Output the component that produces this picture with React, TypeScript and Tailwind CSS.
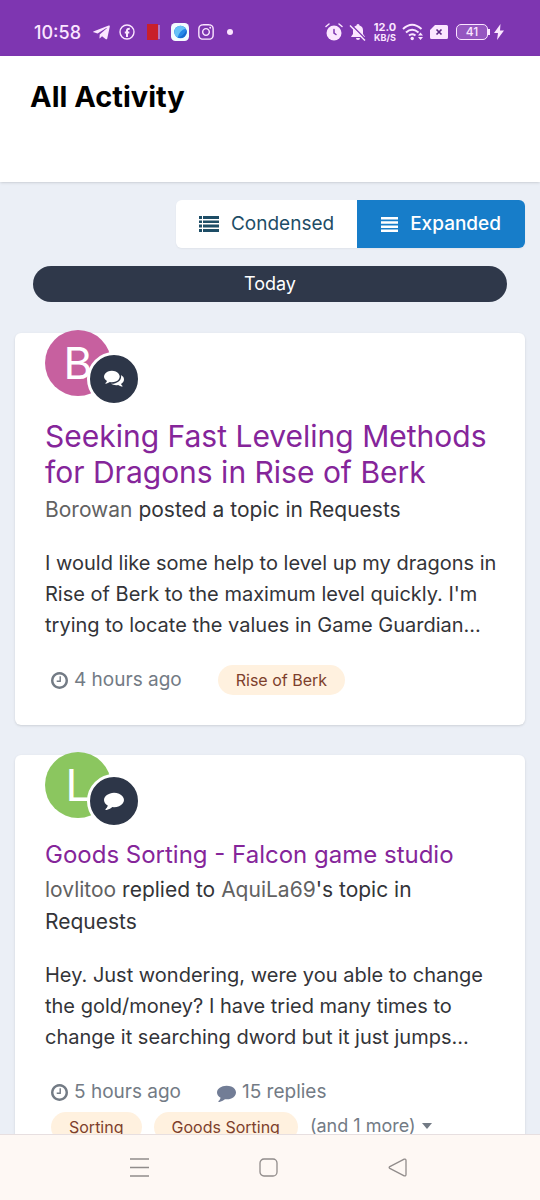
import React from 'react';
import { FaTelegramPlane, FaInstagram } from 'react-icons/fa';

const CommentIcon: React.FC<{ className?: string }> = ({ className }) => (
  <svg viewBox="0 0 1792 1792" fill="currentColor" className={className}>
    <path d="M1792 896q0 174-120 321.5t-326 233-450 85.5q-70 0-145-8-198 175-460 242-49 14-114 22-17 2-30.5-9t-17.5-29v-1q-3-4-.5-12t2-10 4.5-9.5l6-9 7-8.5 8-9q7-8 31-34.5t34.5-38 31-39.5 32.5-51 27-59 26-76q-157-89-247.5-220t-90.5-281q0-130 71-248.5t191-204.5 286-136.5 348-50.5q244 0 450 85.5t326 233 120 321.5z" />
  </svg>
);

const CommentsIcon: React.FC<{ className?: string }> = ({ className }) => (
  <svg viewBox="0 0 1792 1792" fill="currentColor" className={className}>
    <path d="M1408 768q0 139-94 257t-256.5 186.5-353.5 68.5q-86 0-176-16-124 88-278 128-36 9-86 16h-3q-11 0-20.5-8t-11.5-21q-1-3-1-6.5t.5-6.5 2-6l2.5-5 3.5-5.5 4-5 4.5-5 4-4.5q5-6 23-25t26-29.5 22.5-29 25-38.5 20.5-44q-124-72-195-177t-71-224q0-139 94-257t256.5-186.5 353.5-68.5 353.5 68.5 256.500 186.5 94 257zm384 256q0 120-71 224.5t-195 176.5q10 24 20.5 44t25 38.5 22.5 29 26 29.5 23 25q1 1 4 4.5t4.5 5 4 5 3.5 5.5l2.5 5 2 6 .5 6.5-1 6.5q-3 14-13 22t-22 7q-50-7-86-16-154-40-278-128-90 16-176 16-271 0-472-132 58 4 88 4 161 0 309-45t264-129q125-92 192-212t67-254q0-77-23-152 129 71 204 178t75 230z" />
  </svg>
);

const ClockIcon: React.FC = () => (
  <svg viewBox="128 128 1536 1536" fill="currentColor" className="size-[17px]">
    <path d="M1024 544v448q0 14-9 23t-23 9h-320q-14 0-23-9t-9-23v-64q0-14 9-23t23-9h224v-352q0-14 9-23t23-9h64q14 0 23 9t9 23zm416 352q0-148-73-273t-198-198-273-73-273 73-198 198-73 273 73 273 198 198 273 73 273-73 198-198 73-273zm224 0q0 209-103 385.5t-279.5 279.5-385.5 103-385.5-103-279.5-279.5-103-385.5 103-385.5 279.5-279.5 385.5-103 385.5 103 279.5 279.5 103 385.5z" />
  </svg>
);

const StatusBar: React.FC = () => (
  <div className="flex h-14 shrink-0 items-center justify-between bg-[#7e36b1] pt-2 pr-9 pl-[34px] text-[#fbe6ff]">
    <div className="flex items-center">
      <span className="w-[58px] text-[18px] font-medium">10:58</span>
      <FaTelegramPlane className="size-[19px]" />
      <svg viewBox="0 0 16 16" className="ml-2 size-4" fill="none" stroke="currentColor">
        <circle cx="8" cy="8" r="7" strokeWidth="1.4" />
        <path d="M8 13V6.600Q8 4.500 10.800 4.700M5.800 8.500h4.500" strokeWidth="2" />
      </svg>
      <svg viewBox="0 0 14 18" className="ml-3 h-[18px] w-3.5">
        <path fill="#c9202b" d="M0 1h11v16H0z" />
        <path fill="#e5b5d3" d="M11.500 2h1v14h-1z" />
      </svg>
      <svg viewBox="0 0 18 18" className="ml-2.5 size-[18px]">
        <rect width="18" height="18" rx="4.500" fill="#f4fbff" />
        <circle cx="9.500" cy="9" r="6.300" fill="#2687e8" />
        <path d="M3.500 9a6 6 0 0 1 11-3.500Q9 7 6.500 14.500A6 6 0 0 1 3.500 9z" fill="#68c1f7" />
        <path d="M15.500 7q-2 5-8 7.600a6.300 6.300 0 0 0 8-7.600z" fill="#1768cf" />
      </svg>
      <FaInstagram className="ml-2 size-[18px]" />
      <span className="ml-3 size-1.5 rounded-full bg-current" />
    </div>

    <div className="flex items-center">
      <svg viewBox="0 0 18 18" className="size-[18px]" fill="none" stroke="currentColor" strokeLinecap="round">
        <circle cx="9" cy="10" r="7.500" fill="currentColor" stroke="none" />
        <path d="M1 3.500 4 1M17 3.500 14 1" strokeWidth="1.500" />
        <path d="M9 6.500V10l2 1.500" stroke="#7e36b1" strokeWidth="1.500" />
      </svg>
      <svg viewBox="0 0 18 18" className="ml-1.5 size-[18px]">
        <path d="M9 1a1.500 1.500 0 0 1 1.500 1.600A5 5 0 0 1 14 7.500V11l1.800 2.500V14H2.200v-.5L4 11V7.500a5 5 0 0 1 3.500-4.900A1.500 1.500 0 0 1 9 1zM7 15h4a2 2 0 0 1-4 0z" fill="currentColor" />
        <path d="m2 1.500 15 15" stroke="#7e36b1" strokeWidth="1.500" />
        <path d="m1 2.500 15 15" stroke="currentColor" strokeWidth="1.500" />
      </svg>
      <span className="ml-1 flex w-7 flex-col items-center font-bold">
        <span className="text-[11px] leading-[11px]">12.0</span>
        <span className="text-[9px] leading-[9px]">KB/S</span>
      </span>
      <svg viewBox="0 0 22 18" className="ml-[3px] h-[18px] w-[22px]" fill="none" stroke="currentColor">
        <path d="M1 6Q10 -2.500 19.500 6M4 9.500Q10 4 16.500 9.500M7 12.500Q10 10 13.500 12.500" strokeWidth="2" />
        <circle cx="10.200" cy="15.500" r="1.700" fill="currentColor" stroke="none" />
        <path d="m16 12.500 2.500-3 2.500 3zM16 14l2.500 3 2.500-3z" fill="currentColor" stroke="none" />
      </svg>
      <svg viewBox="0 0 18 14" className="ml-1.5 h-3.5 w-[18px]">
        <path d="M5 0h11.500A1.500 1.500 0 0 1 18 1.500v11a1.500 1.500 0 0 1-1.500 1.500h-15A1.500 1.500 0 0 1 0 12.500V5z" fill="currentColor" />
        <path d="m6.500 4.500 5 5m0-5-5 5" stroke="#5d2886" strokeWidth="1.700" />
      </svg>
      <span className="ml-2 flex h-4 w-8 items-center justify-center rounded-[5px] border border-current bg-[#9556c0] text-[12px] font-medium">41</span>
      <span className="h-1.5 w-0.5 bg-current" />
      <svg viewBox="0 0 10 16" className="ml-1 h-4 w-2.5" fill="currentColor">
        <path d="M6.500 0 0 9h4l-1 7 7-9.500H6z" />
      </svg>
    </div>
  </div>
);

const ViewSwitch: React.FC = () => (
  <div className="flex justify-end">
    <div className="flex h-12 overflow-hidden rounded-md text-[19px] shadow-xs">
      <button type="button" className="flex items-center gap-3 bg-white px-[23px] text-[#1d4d66]">
        <svg viewBox="0 0 20 16" className="h-4 w-5" fill="currentColor">
          <path d="M0 0h3v3H0zM4 0h16v3H4zM0 4.500h3v2.500H0zM4 4.500h16v2.500H4zM0 8.500h3v3H0zM4 8.500h16v3H4zM0 13h3v3H0zM4 13h16v3H4z" />
        </svg>
        Condensed
      </button>
      <button type="button" className="flex items-center gap-3 bg-[#177dc9] px-6 font-medium text-white">
        <svg viewBox="0 0 17 15" className="h-[15px] w-[17px]" fill="currentColor">
          <path d="M0 0h17v2.500H0zM0 4.200h17v2.500H0zM0 8.400h17v2.500H0zM0 12.500h17v2.500H0z" />
        </svg>
        Expanded
      </button>
    </div>
  </div>
);

interface AvatarProps {
  letter: string;
  color: string;
  children: React.ReactNode;
}

const Avatar: React.FC<AvatarProps> = ({ letter, color, children }) => (
  <div className="relative -mt-[3px] h-[74px] w-24">
    <div className={`flex size-[66px] items-center justify-center rounded-full text-[44px] text-white ${color}`}>
      {letter}
    </div>
    <div className="absolute right-0 -bottom-0.5 flex size-[54px] items-center justify-center rounded-full border-3 border-white bg-[#2d3648] pb-0.5 text-white">
      {children}
    </div>
  </div>
);

const Card: React.FC<{ children: React.ReactNode }> = ({ children }) => (
  <article className="rounded-md bg-white pr-6 pb-[30px] pl-[30px] shadow-sm">{children}</article>
);

const Tag: React.FC<{ children: React.ReactNode }> = ({ children }) => (
  <a href="#" className="rounded-full bg-[#fff1df] px-[18px] text-[16px] leading-[30px] text-[#7d3f2c]">
    {children}
  </a>
);

export default function App() {
  return (
    <div className="flex h-screen flex-col bg-[#ebeff6] font-['Inter',sans-serif] text-[#333438]">
      <StatusBar />

      <header className="z-10 h-[126px] shrink-0 bg-white px-[30px] pt-5 shadow-sm">
        <h1 className="text-[29px] leading-[42px] font-bold text-black">All Activity</h1>
      </header>

      <main className="min-h-0 flex-1 overflow-hidden px-[15px] pt-[18px]">
        <ViewSwitch />
        <h2 className="mx-[18px] mt-[18px] rounded-full bg-[#2f384a] text-center text-[18px] leading-9 text-white">Today</h2>

        <div className="mt-[31px] flex flex-col gap-[30px]">
          <Card>
            <Avatar letter="B" color="bg-[#c7609f]">
              <CommentsIcon className="size-5" />
            </Avatar>
            <h3 className="mt-[14px] text-[30px] leading-9 text-[#85259a]">
              <a href="#">Seeking Fast Leveling Methods for Dragons in Rise of Berk</a>
            </h3>
            <p className="mt-1 text-[21px] leading-8">
              <a href="#" className="text-[#626262]">Borowan</a> posted a topic in <a href="#">Requests</a>
            </p>
            <p className="mt-[22px] text-[20px] leading-[31px]">
              I would like some help to level up my dragons in Rise of Berk to the maximum level quickly. I'm trying to locate the values in Game Guardian...
            </p>
            <div className="mt-6 flex items-center gap-9 pl-1.5 text-[19px] leading-[30px] text-[#737b85]">
              <a href="#" className="flex items-center gap-1.5">
                <ClockIcon />
                4 hours ago
              </a>
              <Tag>Rise of Berk</Tag>
            </div>
          </Card>

          <Card>
            <Avatar letter="L" color="bg-[#8bc65f]">
              <CommentIcon className="size-5" />
            </Avatar>
            <h3 className="mt-[14px] text-[24px] leading-[30px] text-[#85259a]">
              <a href="#">Goods Sorting - Falcon game studio</a>
            </h3>
            <p className="mt-1 text-[21px] leading-8">
              <a href="#" className="text-[#626262]">lovlitoo</a> replied to <a href="#" className="text-[#626262]">AquiLa69</a>'s topic in <a href="#">Requests</a>
            </p>
            <p className="mt-[22px] text-[20px] leading-[31px]">
              Hey. Just wondering, were you able to change the gold/money? I have tried many times to change it searching dword but it just jumps...
            </p>
            <div className="mt-6 flex items-center gap-9 pl-1.5 text-[19px] leading-[30px] text-[#737b85]">
              <a href="#" className="flex items-center gap-1.5">
                <ClockIcon />
                5 hours ago
              </a>
              <a href="#" className="flex items-center gap-1.5">
                <CommentIcon className="size-[19px] text-[#727d96]" />
                15 replies
              </a>
            </div>
            <div className="mt-[5px] flex items-start gap-3 pl-1.5 text-[18px] leading-[28px] text-[#737b85]">
              <Tag>Sorting</Tag>
              <Tag>Goods Sorting</Tag>
              <button type="button" className="flex items-center gap-1.5">
                (and 1 more)
                <svg viewBox="0 0 10 6" className="h-1.5 w-2.5" fill="currentColor">
                  <path d="M0 0h10L5 6z" />
                </svg>
              </button>
            </div>
          </Card>
        </div>
      </main>

      <nav className="flex h-[66px] shrink-0 items-center justify-center gap-[110px] border-t border-[#e7dfe0] bg-[#fef8f4] pr-[3px] text-[#918c8b]">
        <button type="button" aria-label="Recent apps">
          <svg viewBox="0 0 19 19" className="size-[19px]" fill="none" stroke="currentColor" strokeWidth="1.300">
            <path d="M0 1h19M0 9.500h19M0 18h19" />
          </svg>
        </button>
        <button type="button" aria-label="Home">
          <svg viewBox="0 0 19 19" className="size-[19px]" fill="none" stroke="currentColor" strokeWidth="1.300">
            <rect x="1" y="1" width="17" height="17" rx="4" />
          </svg>
        </button>
        <button type="button" aria-label="Back">
          <svg viewBox="0 0 19 19" className="size-[19px]" fill="none" stroke="currentColor" strokeWidth="1.300" strokeLinejoin="round">
            <path d="M16.200 1.200 1.800 8.600q-1.300.9 0 1.800l14.400 7.400q1.800.6 1.800-1.200V2.400q0-1.800-1.800-1.200z" />
          </svg>
        </button>
      </nav>
    </div>
  );
}
